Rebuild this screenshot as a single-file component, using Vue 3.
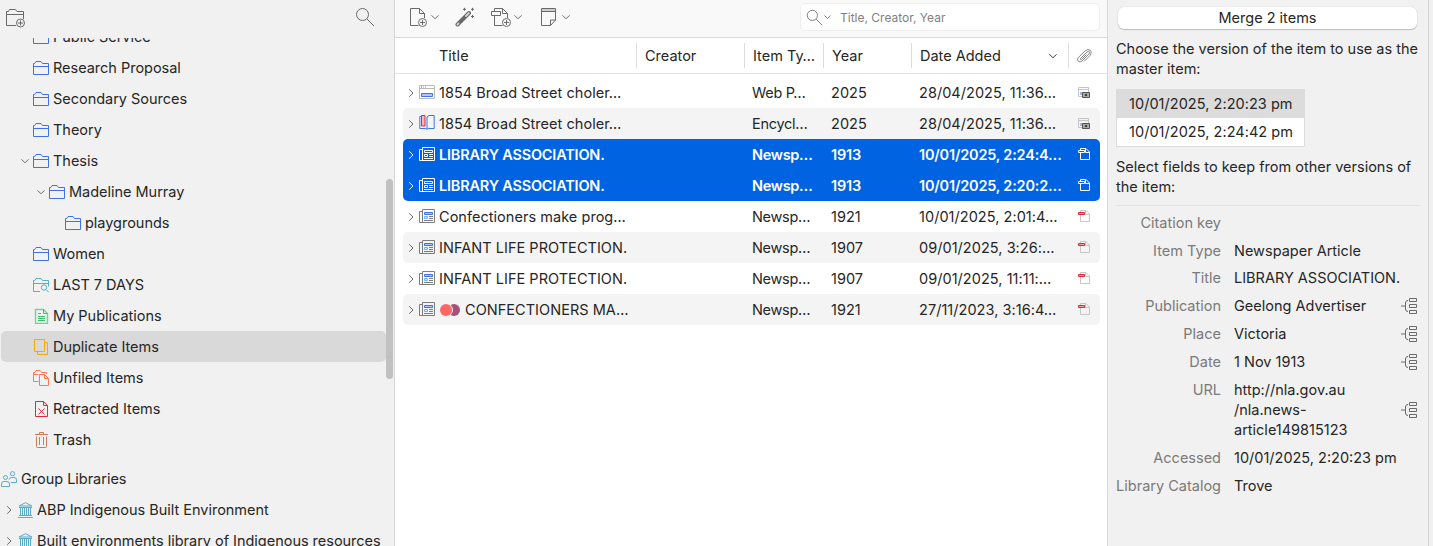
<template>
  <div class="app">
    <svg class="sprite" aria-hidden="true">
      <symbol id="folder" viewBox="0 0 16 16"><path d="M.5 14.5v-11h1.200l1.300-2h5l1.500 2h6v11zM.5 6.500h15" /></symbol>
      <symbol id="saved-search" viewBox="0 0 16 16">
        <path d="M7 14.500H.5v-11h1.200l1.300-2h5l1.500 2h6v6M.5 6.500h15" />
        <circle cx="11" cy="10.500" r="2.700" /><path d="M13 12.500l2.700 2.700" />
      </symbol>
      <symbol id="publications" viewBox="0 0 16 16">
        <path d="M2.500 1.500h8l4 4v10h-12z" stroke-opacity=".65" stroke-width="1.400" /><path d="M10.500 1.500v4h4M5 5.500h3M5 8.500h7M5 10.500h7M5 12.500h7" />
      </symbol>
      <symbol id="duplicates" viewBox="0 0 16 16"><path d="M1.500 .5h10v12h-10zM12 3.500h2.500v12h-10V13" /></symbol>
      <symbol id="unfiled" viewBox="0 0 16 16">
        <path d="M5.500 11.500h-5v-9h1.500l1-2h4l1.500 2h5V4M.5 4.500h5" /><path d="M6.500 4.500h5l4 4v7h-9zM11.500 4.500v4h4" />
      </symbol>
      <symbol id="retracted" viewBox="0 0 16 16"><path d="M2.500 .5h8l4 4v11h-12zM10.500 .5v4h4M5.500 7.500l6 6M11.500 7.500l-6 6" /></symbol>
      <symbol id="trash" viewBox="0 0 16 16"><path d="M2 2.500h13M6.500 2.500v-2h4v2M3.500 4.500v10q0 1 1 1h8q1 0 1-1v-10M6.500 5v8M10.500 5v8" /></symbol>
      <symbol id="groups" viewBox="0 0 16 16">
        <circle cx="4.500" cy="6.500" r="2" /><path d="M.5 15.500v-2.500q0-2.500 2.500-2.500h3q2.500 0 2.500 2.500v2.500z" />
        <circle cx="11.500" cy="2.700" r="2.100" /><path d="M8 8.500q.5-2 2.500-2h2.500q2.500 0 2.500 2.500v2.500h-5.500" />
      </symbol>
      <symbol id="library" viewBox="0 0 16 16"><path d="M2 4L8.500 .7l6.500 3.300zM2 5.500h13M3.500 6v7M5.500 6v7M7.500 6v7M9.500 6v7M11.500 6v7M13.500 6v7M2 13.500h13M1 15.500h15" /></symbol>
      <symbol id="down" viewBox="0 0 8 8"><path d="M.5 2.300L4 5.800l3.500-3.500" /></symbol>
      <symbol id="right" viewBox="0 0 8 8"><path d="M2.200 .3L6 4 2.200 7.700" /></symbol>
      <symbol id="new-collection" viewBox="0 0 20 20">
        <path d="M11 17.500H1.500v-14h2l1-2h6l1.500 2h6.500V11M1.500 6.500h17" />
        <circle cx="15.500" cy="15" r="4" /><path d="M15.500 12.500v5M13 15h5" />
      </symbol>
      <symbol id="search" viewBox="0 0 20 20"><circle cx="7.500" cy="7.500" r="6" /><path d="M12 12l7 7" /></symbol>
      <symbol id="new-item" viewBox="0 0 20 20">
        <path d="M10.500 18.500H2.500V1.500h9l5 5V11M11.500 1.500v5h5" />
        <circle cx="14.500" cy="15.500" r="4" /><path d="M14.500 13v5M12 15.500h5" />
      </symbol>
      <symbol id="wand" viewBox="0 0 20 20">
        <path d="M2.500 17.500L14 6" stroke-width="4" stroke-linecap="round" />
        <path d="M11 9L13.800 6.200M2.500 17.500l1-1" class="hollow" stroke-width="1.800" stroke-linecap="round" />
        <path d="M9.500 .8v3M8 2.300h3M17.500 .8v3M16 2.300h3M17.500 8v3M16 9.500h3" />
      </symbol>
      <symbol id="add-attachment" viewBox="0 0 20 20">
        <path d="M.5 4.500h9v4H.5zM3.500 4V1.500h8l5 5V11M11.500 1.500v5h5M3.500 9v9.500h8" />
        <circle cx="15.500" cy="15.500" r="4" /><path d="M15.500 13v5M13 15.500h5" />
      </symbol>
      <symbol id="note" viewBox="0 0 20 20"><path d="M2 3h14" stroke-opacity=".3" stroke-width="2" /><path d="M1.500 1.500h14v11.500l-5 5.500h-9zM1.500 4.500h14M10.500 18.500v-5.500h5" /></symbol>
      <symbol id="clip" viewBox="0 0 16 16"><path d="M4.500 10.500l6.500-6.500q1.500-1.200 2.300-.2t-.3 2.200L6 13q-2 1.600-3.700 .3T2.200 9.700L9 3q3-2.700 5.300-.7t-.3 5.200L8 13.500M4.500 10.500q-.4 1.500 1 1l5-5" stroke-width=".8" /></symbol>
      <symbol id="webpage" viewBox="0 0 16 16">
        <path d="M.5 1.500h15v13H.5zM1 4.500h14" stroke="#b9b9b9" /><path d="M2 3h1" stroke="#db2c3a" /><path d="M4 3h1" stroke="#ff794c" /><path d="M6 3h1" stroke="#39bf68" />
        <path d="M2.500 9.500h11v3h-11z" stroke="#4072e5" fill="#b3c7f7" />
      </symbol>
      <symbol id="encyclopedia" viewBox="0 0 16 16">
        <path d="M2 1.500H.8v12h6l1.200 1 1.200-1h6V.5H10L8 2v12" stroke="#4072e5" /><path d="M2.500 .5h3.500v10.500H2.500z" stroke="#db2c3a" fill="#f4b8bd" />
      </symbol>
      <symbol id="newspaper" viewBox="0 0 16 16">
        <path d="M3 3.500H.5v11h14.500M3.500 1.500h12v13h-12zM5 12.500h9" class="np-frame" />
        <path d="M5.500 4.500h8v2h-8z" class="np-head" /><path d="M5.500 8.500h3v2h-3z" class="np-photo" /><path d="M10 8.500h4M10 10.500h4" class="np-frame" />
      </symbol>
      <symbol id="snapshot" viewBox="0 0 16 16">
        <path d="M6 12.500H2.500v-9h10V8M2.500 5.500h10" stroke="#c4c4c4" /><path d="M5 8v3" stroke="#9bb7f5" stroke-width="2" />
        <path d="M6.500 8.500h7v5h-7z" stroke="#555" fill="#ababab" /><circle cx="10" cy="11" r=".8" stroke="#333" fill="#333" />
      </symbol>
      <symbol id="pdf" viewBox="0 0 16 16">
        <path d="M4.500 7v6.500h9V6l-3.500-3.500H4.500V4M9.500 2.500V6.500h4" class="pdf-page" /><path d="M2.500 4.500h6v2h-6z" class="pdf-tag" />
      </symbol>
      <symbol id="merge" viewBox="0 0 16 16"><path d="M8.500 .5h7v3h-7zM8.500 6.500h7v3h-7zM8.500 12.500h7v3h-7zM0 8h4.500M7 2.500q-2.500 0-2.500 2.500v6q0 2.500 2.500 2.500" /></symbol>
    </svg>

    <aside class="sidebar">
      <div class="sidebar__toolbar">
        <svg class="icon icon--tool"><use href="#new-collection" /></svg>
        <svg class="icon icon--tool find"><use href="#search" /></svg>
      </div>
      <div class="tree">
        <div class="tree__rows">
          <div
            v-for="row in tree"
            :key="row.label"
            class="tree__row"
            :class="['level-' + row.level, { selected: row.selected, spaced: row.header }]"
          >
            <span v-if="!row.header" class="twisty">
              <svg v-if="row.twisty" class="icon chevron"><use :href="'#' + row.twisty" /></svg>
            </span>
            <svg class="icon" :class="row.icon"><use :href="'#' + row.icon" /></svg>
            <span>{{ row.label }}</span>
          </div>
        </div>
        <div class="tree__scrollbar" />
      </div>
    </aside>

    <main class="items">
      <div class="toolbar">
        <div v-for="tool in tools" :key="tool.icon" class="toolbar__button" :class="tool.icon">
          <svg class="icon icon--tool"><use :href="'#' + tool.icon" /></svg>
          <svg v-if="tool.menu" class="icon chevron"><use href="#down" /></svg>
        </div>
        <div class="search">
          <svg class="icon icon--search"><use href="#search" /></svg>
          <svg class="icon chevron chevron--small"><use href="#down" /></svg>
          <span class="search__placeholder">Title, Creator, Year</span>
        </div>
      </div>
      <div class="header grid">
        <span class="header__title">Title</span>
        <span>Creator</span>
        <span>Item Ty…</span>
        <span>Year</span>
        <span class="header__date">Date Added <svg class="icon chevron dark"><use href="#down" /></svg></span>
        <span class="header__clip"><svg class="icon"><use href="#clip" /></svg></span>
      </div>
      <div class="rows">
        <div v-for="(item, i) in items" :key="i" class="row grid" :class="{ selected: item.selected }">
          <div class="cell cell--title">
            <svg class="icon chevron"><use href="#right" /></svg>
            <svg class="icon"><use :href="'#' + item.icon" /></svg>
            <span v-if="item.tags" class="tags"><i class="tag tag--red" /><i class="tag tag--plum" /></span>
            <span>{{ item.title }}</span>
          </div>
          <div class="cell" />
          <div class="cell cell--type">{{ item.type }}</div>
          <div class="cell">{{ item.year }}</div>
          <div class="cell">{{ item.date }}</div>
          <div class="cell"><svg class="icon"><use :href="'#' + item.attachment" /></svg></div>
        </div>
      </div>
    </main>

    <section class="merge">
      <button class="merge__button">Merge 2 items</button>
      <p>Choose the version of the item to use as the master item:</p>
      <div class="versions">
        <div class="version selected">10/01/2025, 2:20:23 pm</div>
        <div class="version">10/01/2025, 2:24:42 pm</div>
      </div>
      <p>Select fields to keep from other versions of the item:</p>
      <div class="fields">
        <div v-for="field in fields" :key="field.label" class="field">
          <span class="field__label">{{ field.label }}</span>
          <span class="field__value">{{ field.value }}</span>
          <svg v-if="field.merge" class="icon"><use href="#merge" /></svg>
        </div>
      </div>
    </section>
  </div>
</template>

<script setup>
const tree = [
  { label: 'Public Service', icon: 'folder', level: 1 },
  { label: 'Research Proposal', icon: 'folder', level: 1 },
  { label: 'Secondary Sources', icon: 'folder', level: 1 },
  { label: 'Theory', icon: 'folder', level: 1 },
  { label: 'Thesis', icon: 'folder', level: 1, twisty: 'down' },
  { label: 'Madeline Murray', icon: 'folder', level: 2, twisty: 'down' },
  { label: 'playgrounds', icon: 'folder', level: 3 },
  { label: 'Women', icon: 'folder', level: 1 },
  { label: 'LAST 7 DAYS', icon: 'saved-search', level: 1 },
  { label: 'My Publications', icon: 'publications', level: 1 },
  { label: 'Duplicate Items', icon: 'duplicates', level: 1, selected: true },
  { label: 'Unfiled Items', icon: 'unfiled', level: 1 },
  { label: 'Retracted Items', icon: 'retracted', level: 1 },
  { label: 'Trash', icon: 'trash', level: 1 },
  { label: 'Group Libraries', icon: 'groups', level: 0, header: true },
  { label: 'ABP Indigenous Built Environment', icon: 'library', level: 0, twisty: 'right' },
  { label: 'Built environments library of Indigenous resources', icon: 'library', level: 0, twisty: 'right' },
];

const tools = [
  { icon: 'new-item', menu: true },
  { icon: 'wand' },
  { icon: 'add-attachment', menu: true },
  { icon: 'note', menu: true },
];

const items = [
  { icon: 'webpage', title: '1854 Broad Street choler…', type: 'Web P…', year: '2025', date: '28/04/2025, 11:36…', attachment: 'snapshot' },
  { icon: 'encyclopedia', title: '1854 Broad Street choler…', type: 'Encycl…', year: '2025', date: '28/04/2025, 11:36…', attachment: 'snapshot' },
  { icon: 'newspaper', title: 'LIBRARY ASSOCIATION.', type: 'Newsp…', year: '1913', date: '10/01/2025, 2:24:4…', attachment: 'pdf', selected: true },
  { icon: 'newspaper', title: 'LIBRARY ASSOCIATION.', type: 'Newsp…', year: '1913', date: '10/01/2025, 2:20:2…', attachment: 'pdf', selected: true },
  { icon: 'newspaper', title: 'Confectioners make prog…', type: 'Newsp…', year: '1921', date: '10/01/2025, 2:01:4…', attachment: 'pdf' },
  { icon: 'newspaper', title: 'INFANT LIFE PROTECTION.', type: 'Newsp…', year: '1907', date: '09/01/2025, 3:26:…', attachment: 'pdf' },
  { icon: 'newspaper', title: 'INFANT LIFE PROTECTION.', type: 'Newsp…', year: '1907', date: '09/01/2025, 11:11:…', attachment: 'pdf' },
  { icon: 'newspaper', title: 'CONFECTIONERS MA…', type: 'Newsp…', year: '1921', date: '27/11/2023, 3:16:4…', attachment: 'pdf', tags: true },
];

const fields = [
  { label: 'Citation key', value: '' },
  { label: 'Item Type', value: 'Newspaper Article' },
  { label: 'Title', value: 'LIBRARY ASSOCIATION.' },
  { label: 'Publication', value: 'Geelong Advertiser', merge: true },
  { label: 'Place', value: 'Victoria', merge: true },
  { label: 'Date', value: '1 Nov 1913', merge: true },
  { label: 'URL', value: 'http://nla.gov.au\n/nla.news-\narticle149815123', merge: true },
  { label: 'Accessed', value: '10/01/2025, 2:20:23 pm' },
  { label: 'Library Catalog', value: 'Trove' },
];
</script>

<style>
body {
  background: #f1f1f1;
  overflow: hidden;
}
</style>

<style scoped>
.app {
  display: flex;
  height: 546px;
  overflow: hidden;
  font-family: Inter, "Liberation Sans", sans-serif;
  font-size: 14.5px;
  line-height: 20px;
  letter-spacing: 0;
  color: #262626;
  white-space: nowrap;
}
.sprite {
  position: absolute;
  width: 0;
  height: 0;
}
.icon {
  flex: none;
  width: 16px;
  height: 16px;
  fill: none;
  stroke: currentColor;
  color: #6a6a6a;
}
.icon--tool {
  width: 20px;
  height: 20px;
}
.chevron {
  width: 8px;
  height: 8px;
}

.sidebar {
  flex: none;
  display: flex;
  flex-direction: column;
  width: 394px;
  background: #f1f1f1;
  border-right: 1px solid #d4d4d4;
}
.sidebar__toolbar {
  flex: none;
  display: flex;
  justify-content: space-between;
  height: 38px;
  box-sizing: border-box;
  padding: 8px 19px 0 5px;
}
.find {
  margin-top: -1px;
}
.tree {
  flex: 1;
  display: flex;
  min-height: 0;
  overflow: hidden;
}
.tree__rows {
  flex: none;
  width: 385px;
  margin: -17px 0 0 1px;
}
.tree__row {
  display: flex;
  align-items: center;
  height: 31px;
  border-radius: 5px;
  letter-spacing: -.02px;
}
.tree__row .icon:not(.chevron) {
  margin: 1px 4px 0 0;
}
.tree__row.selected {
  background: #d9d9d9;
}
.tree__row.spaced {
  margin-top: 8px;
}
.level-1 {
  padding-left: 16px;
}
.level-2 {
  padding-left: 32px;
}
.level-3 {
  padding-left: 48px;
}
.twisty {
  flex: none;
  display: flex;
  justify-content: center;
  width: 16px;
}
.tree__scrollbar {
  width: 7px;
  height: 200px;
  margin-top: 141px;
  border-radius: 4px;
  background: #c1c1c1;
}
.folder {
  color: #4072e5;
}
.saved-search, .groups, .library {
  color: #59adc4;
}
.publications {
  color: #39bf68;
}
.duplicates {
  color: #faa700;
}
.unfiled {
  color: #ff794c;
}
.retracted {
  color: #db2c3a;
}
.trash {
  color: #cc7a52;
}

.items {
  flex: none;
  width: 712px;
  background: #fff;
  border-right: 1px solid #dadada;
}
.toolbar {
  display: flex;
  height: 37px;
  padding: 0 7px 0 13px;
  background: #f9f9f9;
  border-bottom: 1px solid #d9d9d9;
}
.toolbar__button {
  display: flex;
  align-items: center;
  gap: 3px;
  height: 34px;
}
.toolbar__button.wand,
.toolbar__button.add-attachment {
  margin-left: 16px;
}
.toolbar__button.note {
  margin-left: 18px;
}
.toolbar__button.note {
  gap: 2px;
}
.hollow {
  stroke: #d5d5d5;
}
.search {
  display: flex;
  align-items: center;
  width: 298px;
  height: 26px;
  margin: 3px 0 0 auto;
  border: 1px solid #eee;
  border-radius: 5px;
  background: #fff;
  font-size: 12px;
  color: #7f7f7f;
}
.search__placeholder {
  margin-top: 1px;
}
.icon--search {
  width: 17px;
  height: 17px;
  margin-left: 5px;
}
.chevron--small {
  width: 7px;
  margin: 0 9px 0 1px;
}
.grid {
  display: grid;
  grid-template-columns: 233px 108px 79px 88px 157px 1fr;
  align-items: center;
}
.header {
  height: 35px;
  padding: 0 7px 0 8px;
  border-bottom: 1px solid #e2e2e2;
}
.header span {
  height: 25px;
  line-height: 25px;
  padding-left: 8px;
  border-left: 1px solid #dcdcdc;
}
.header .header__title {
  border: 0;
  padding-left: 36px;
}
.header .header__date {
  display: flex;
  align-items: center;
  justify-content: space-between;
  padding-right: 11px;
}
.header .header__clip {
  display: flex;
  align-items: center;
  padding-left: 7px;
}
.dark {
  color: #333;
}
.rows {
  padding: 3px 7px 0 8px;
}
.row {
  --frame: #7d7d7d;
  --head: #4072e5;
  --head-fill: #b3c7f7;
  --photo: #6ab5f5;
  --photo-fill: #cfe8ff;
  --page: #c6c6c6;
  --tag: #db2c3a;
  --tag-fill: #f2a0a7;
  height: 31px;
  border-radius: 5px;
  letter-spacing: .04px;
}
.row:nth-child(even) {
  background: #f4f4f4;
}
.row.selected {
  --frame: #fff;
  --head: #fff;
  --head-fill: none;
  --photo: #fff;
  --photo-fill: none;
  --page: #fff;
  --tag: #fff;
  --tag-fill: none;
  background: #0063e1;
  color: #fff;
  font-weight: 600;
  letter-spacing: -.2px;
}
.row.selected + .row.selected {
  border-radius: 0 0 5px 5px;
}
.row.selected:has(+ .selected) {
  border-radius: 5px 5px 0 0;
}
.row.selected .icon {
  color: #fff;
}
.cell {
  display: flex;
  align-items: center;
  padding-left: 8px;
}
.cell .icon:not(.chevron) {
  margin-bottom: 1px;
}
.cell--title {
  padding-left: 4px;
}
.cell--title .icon {
  margin-right: 4px;
}
.cell--type {
  letter-spacing: -.3px;
}
.tags {
  display: flex;
  margin: 0 5px 0 1px;
}
.tag {
  width: 12px;
  height: 12px;
  border-radius: 50%;
}
.tag--red {
  z-index: 1;
  background: #ff6666;
  box-shadow: 1px 0 #f4f4f4;
}
.tag--plum {
  margin-left: -4px;
  background: #a6507b;
}
.np-frame {
  stroke: var(--frame);
}
.np-head {
  stroke: var(--head);
  fill: var(--head-fill);
}
.np-photo {
  stroke: var(--photo);
  fill: var(--photo-fill);
}
.pdf-page {
  stroke: var(--page);
}
.pdf-tag {
  stroke: var(--tag);
  fill: var(--tag-fill);
}

.merge {
  flex: none;
  width: 304px;
  padding: 7px 8px 0;
  border-right: 1px solid #d4d4d4;
  background: #f1f1f1;
}
.merge__button {
  display: block;
  width: 299px;
  height: 22px;
  margin: 0 0 10px 2px;
  padding: 0;
  border: 0;
  border-radius: 6px;
  background: #fff;
  box-shadow: 0 0 1px rgba(0, 0, 0, .2), 0 1px 1px rgba(0, 0, 0, .2);
  font: inherit;
  letter-spacing: inherit;
  color: inherit;
}
.merge p {
  margin: 0 -4px 0 0;
  white-space: normal;
}
.versions {
  width: 187px;
  margin: 10px 0;
  border: 1px solid #dcdcdc;
  background: #fff;
}
.version {
  height: 28px;
  padding-left: 12px;
  line-height: 28px;
  letter-spacing: .04px;
}
.version.selected {
  background: #dcdcdc;
}
.fields {
  margin-top: 8px;
  padding-top: 6.65px;
  border-top: 1px solid #e2e2e2;
}
.field {
  display: grid;
  grid-template-columns: 105px 154px 16px;
  column-gap: 13px;
  align-items: center;
  margin-bottom: 7.9px;
}
.field__label {
  align-self: start;
  text-align: right;
  color: #7a7a7a;
}
.field__value {
  white-space: pre;
}
</style>
